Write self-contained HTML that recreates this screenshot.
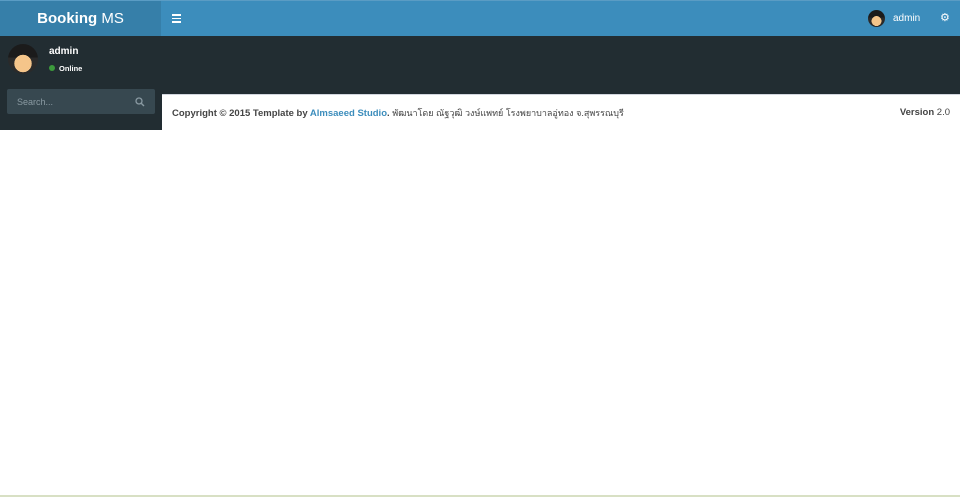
<!DOCTYPE html><html><head><meta charset="utf-8"><style>
body{margin:0;width:960px;height:497px;overflow:hidden;background:#fff;font-family:"Liberation Sans",sans-serif;position:relative}
.hdr{position:absolute;top:0;left:0;width:960px;height:36px;background:#3c8dbc;border-top:1px solid #5a9cc4;box-sizing:border-box}
.logo{position:absolute;left:0;top:0;width:161px;height:36px;background:#367fa9;color:#fff;font-size:15px;text-align:center;line-height:35px}
.dark{position:absolute;top:36px;left:0;width:960px;height:58px;background:#222d32}
.side{position:absolute;top:94px;left:0;width:162px;height:36px;background:#222d32}
.av{position:absolute;border-radius:50%;background:radial-gradient(circle at 50% 65%,#f5c58a 0 35%,transparent 36%),linear-gradient(#1b1b1b 0 45%,#2a2a2a 45%);}
.foot{position:absolute;top:94px;left:162px;width:798px;height:36px;border-top:1px solid #d2d6de;box-sizing:border-box;font-size:9.5px;color:#444;line-height:36px}
</style></head><body>
<div class="hdr"><div class="logo"><b>Booking</b> MS</div>
<div style="position:absolute;left:172px;top:13px;width:9px;"><div style="height:1.5px;background:#fff;margin-bottom:2px"></div><div style="height:1.5px;background:#fff;margin-bottom:2px"></div><div style="height:1.5px;background:#fff"></div></div>
<div class="av" style="left:868px;top:9px;width:17px;height:17px"></div>
<div style="position:absolute;left:893px;top:12px;color:#fff;font-size:10px">admin</div>
<div style="position:absolute;left:940px;top:10px;color:#fff;font-size:11px">⚙</div>
</div>
<div class="dark">
<div class="av" style="left:8px;top:8px;width:30px;height:30px"></div>
<div style="position:absolute;left:49px;top:10px;color:#fff;font-size:10px;font-weight:bold">admin</div>
<div style="position:absolute;left:49px;top:29px;width:6px;height:6px;border-radius:50%;background:#3c9a3c"></div>
<div style="position:absolute;left:59px;top:28px;color:#fff;font-size:7.5px;font-weight:bold">Online</div>
</div>
<div class="side"></div>
<div style="position:absolute;left:7px;top:89px;width:148px;height:25px;background:#374850;border-radius:2px"></div>
<div style="position:absolute;left:17px;top:97px;color:#8a9aa2;font-size:9px">Search...</div>
<svg style="position:absolute;left:135px;top:97px" width="10" height="10" viewBox="0 0 10 10"><circle cx="4" cy="4" r="3" fill="none" stroke="#8a9aa2" stroke-width="1.3"/><path d="M6.2 6.2L9 9" stroke="#8a9aa2" stroke-width="1.4"/></svg>
<div class="foot"><span style="padding-left:10px"><b>Copyright © 2015 Template by <span style="color:#3c8dbc">Almsaeed Studio</span>.</b> <span style="font-family:'Liberation Sans','Noto Sans CJK SC',sans-serif;font-size:9px">พัฒนาโดย ณัฐวุฒิ วงษ์แพทย์ โรงพยาบาลอู่ทอง จ.สุพรรณบุรี</span></span>
<span style="position:absolute;right:10px;top:0"><b>Version</b> 2.0</span></div>
<div style="position:absolute;left:0;top:495px;width:960px;height:2px;background:#d8e0c4"></div>
</body></html>
